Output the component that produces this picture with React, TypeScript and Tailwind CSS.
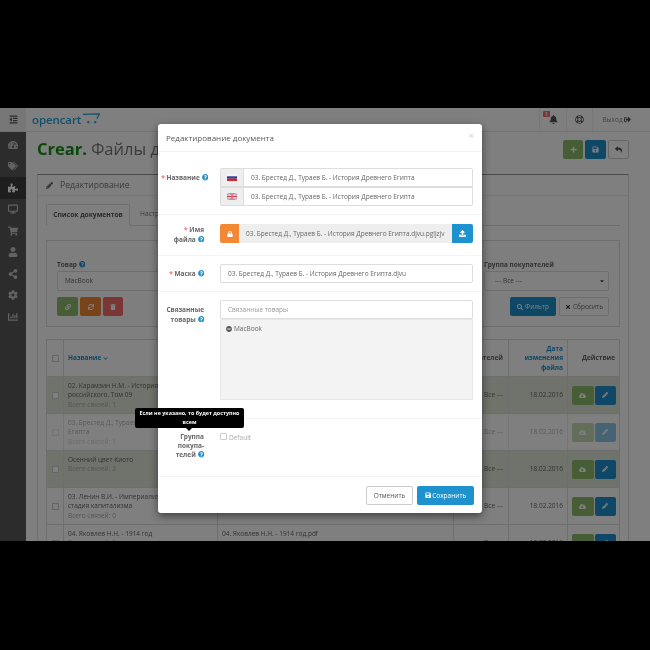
import React from 'react';
import {
  FaBell, FaChartBar, FaChevronDown, FaCaretDown, FaCloudDownloadAlt, FaCog, FaDesktop, FaTimes, FaRegLifeRing, FaLink,
  FaLock, FaMinusCircle, FaPencilAlt, FaPlus, FaPuzzlePiece, FaQuestionCircle, FaReply, FaSave, FaSearch, FaShareAlt,
  FaShoppingCart, FaSignOutAlt, FaSync, FaTachometerAlt, FaTags, FaTrash, FaUpload, FaUser, FaOutdent,
} from 'react-icons/fa';

const SIDE_ICONS = [
  { icon: FaTachometerAlt },
  { icon: FaTags },
  { icon: FaPuzzlePiece, active: true },
  { icon: FaDesktop },
  { icon: FaShoppingCart },
  { icon: FaUser },
  { icon: FaShareAlt },
  { icon: FaCog },
  { icon: FaChartBar },
];

const ROWS = [
  { title: '02. Карамзин Н.М. - История государства российского. Том 09', links: 'Всего связей: 1', file: '02. Карамзин Н.М. - История.djvu', green: true },
  { title: '03. Брестед Д., Тураев Б. - История Древнего Египта', links: 'Всего связей: 1', file: '03. Брестед Д., Тураев Б.djvu', faded: true },
  { title: 'Осенний цвет Киото', links: 'Всего связей: 2', file: 'Осенний цвет Киото.pdf', green: true },
  { title: '03. Ленин В.И. - Империализм, как высшая стадия капитализма', links: 'Всего связей: 0', file: 'капитализма.fb2z5KhcJ0eHHmRzZUlHTQHCAmgSWJdJ - UK' },
  { title: '04. Яковлев Н.Н. - 1914 год', links: 'Всего связей: 0', file: '04. Яковлев Н.Н. - 1914 год.pdf' },
];

const Help = () => <FaQuestionCircle className="inline-block text-[6.5px] text-[#1e91cf] align-[-0.5px]" />;

const Req = () => <span className="text-[#f56b6b]">* </span>;

const FlagRu = () => (
  <svg width="10" height="7" viewBox="0 0 10 7">
    <rect width="10" height="2.4" fill="#f4f4f4" />
    <rect y="2.3" width="10" height="2.4" fill="#2a3f9e" />
    <rect y="4.6" width="10" height="2.4" fill="#d8232a" />
  </svg>
);

const FlagGb = () => (
  <svg width="10" height="7" viewBox="0 0 10 7">
    <rect width="10" height="7" fill="#8d8dbb" />
    <path d="M0 0l10 7M10 0L0 7" stroke="#f0d0d0" strokeWidth="1.2" />
    <path d="M5 0v7M0 3.5h10" stroke="#eeeeee" strokeWidth="2.2" />
    <path d="M5 0v7M0 3.5h10" stroke="#d8434a" strokeWidth="1.2" />
  </svg>
);

const Cart = () => (
  <svg width="17" height="11" viewBox="0 0 16 10" fill="none" className="ml-[2px] mb-[3px]">
    <path d="M0 1.2c4-.6 10-.6 15.5-.6L13 5.2" stroke="#23a1d1" strokeWidth="1.2" />
    <circle cx="5" cy="8.4" r="1.1" fill="#23a1d1" />
    <circle cx="11.5" cy="8.4" r="1.1" fill="#23a1d1" />
  </svg>
);

const Modal = () => (
  <div className="absolute left-[158px] top-[16px] w-[324px] h-[389px] bg-white rounded-[3px] shadow-[0_3px_9px_rgba(0,0,0,0.5)] text-[6.5px] text-[#666]">
    <div className="h-[28px] border-b border-[#f2f2f2] px-[8px] flex items-center justify-between">
      <span className="text-[8px] text-[#595959]">Редактирование документа</span>
      <span className="text-[9px] text-[#d8d8d8] mb-[4px] font-bold">×</span>
    </div>

    <div className="h-[63px] border-b border-[#f4f4f4] flex pt-[16px]">
      <label className="w-[50px] shrink-0 text-right font-bold pt-[5px] leading-[9px] whitespace-nowrap"><Req />Название <Help /></label>
      <div className="ml-[12px] w-[253px]">
        <div className="h-[19px] flex border border-[#ddd] rounded-t-[2px]">
          <span className="w-[23px] bg-[#eee] border-r border-[#ddd] flex items-center justify-center"><FlagRu /></span>
          <span className="pl-[7px] leading-[17px]">03. Брестед Д., Тураев Б. - История Древнего Египта</span>
        </div>
        <div className="h-[19px] flex border border-[#ddd] rounded-b-[2px]">
          <span className="w-[23px] bg-[#eee] border-r border-[#ddd] flex items-center justify-center"><FlagGb /></span>
          <span className="pl-[7px] leading-[17px]">03. Брестед Д., Тураев Б. - История Древнего Египта</span>
        </div>
      </div>
    </div>

    <div className="h-[41px] border-b border-[#f4f4f4] flex pt-[9px]">
      <label className="w-[46px] shrink-0 text-right font-bold leading-[9.5px] pt-[1px]"><Req />Имя<br />файла <Help /></label>
      <div className="ml-[16px] w-[253px] h-[19px] flex">
        <span className="w-[19px] bg-[#f38733] rounded-l-[2px] flex items-center justify-center text-white text-[6px]"><FaLock /></span>
        <span className="w-[213px] bg-[#eee] pl-[7px] leading-[19px] whitespace-nowrap overflow-hidden">03. Брестед Д., Тураев Б. - История Древнего Египта.djvu.pgljzjv</span>
        <span className="w-[21px] bg-[#1e91cf] rounded-r-[2px] flex items-center justify-center text-white text-[7px]"><FaUpload /></span>
      </div>
    </div>

    <div className="h-[36px] border-b border-[#f4f4f4] flex pt-[8px]">
      <label className="w-[46px] shrink-0 text-right font-bold pt-[5px] leading-[9px]"><Req />Маска <Help /></label>
      <div className="ml-[16px] w-[253px] h-[19px] border border-[#ddd] rounded-[2px] pl-[7px] leading-[17px]">03. Брестед Д., Тураев Б. - История Древнего Египта.djvu</div>
    </div>

    <div className="h-[127px] border-b border-[#f4f4f4] flex pt-[8px]">
      <label className="w-[46px] shrink-0 text-right font-bold leading-[9.5px] pt-[5px]">Связанные<br />товары <Help /></label>
      <div className="ml-[16px] w-[253px]">
        <div className="h-[19px] border border-[#ddd] rounded-[2px] pl-[7px] leading-[17px] text-[#999]">Связанные товары</div>
        <div className="h-[81px] bg-[#f3f3f3] border border-[#e8e8e8] px-[5px] pt-[4px] flex items-start gap-[2px] leading-[10px]">
          <FaMinusCircle className="text-[6px] text-[#555] mt-[2px]" /> MacBook
        </div>
      </div>
    </div>

    <div className="h-[58px] border-b border-[#f4f4f4] flex pt-[13px]">
      <label className="w-[46px] shrink-0 text-right font-bold leading-[9.2px]">Группа<br />покупа-<br />телей <Help /></label>
      <div className="ml-[16px] flex items-start gap-[2px] text-[#aaa]">
        <span className="w-[7px] h-[7px] mt-[1px] border border-[#ccc] rounded-[1px]" />
        <span className="leading-[9px] mt-[1px]">Default</span>
      </div>
    </div>

    <div className="flex justify-end gap-[4px] pt-[9px] pr-[8px]">
      <button className="w-[47px] h-[19px] bg-white border border-[#ccc] rounded-[2px] text-[#555]">Отменить</button>
      <button className="w-[57px] h-[19px] bg-[#1e91cf] rounded-[2px] text-white flex items-center justify-center gap-[1px]"><FaSave className="text-[6.5px]" />Сохранить</button>
    </div>

    <div className="absolute left-[-23px] top-[284px] w-[109px] h-[20px] bg-black rounded-[2px] px-[4px] text-white text-[5.4px] font-bold text-center leading-[8.5px] pt-[1px]">
      Если не указано, то будет доступно всем
      <span className="absolute left-[51px] bottom-[-3px] border-x-[3px] border-x-transparent border-t-[3px] border-t-black" />
    </div>
  </div>
);

export default function App() {
  return (
    <div className="w-[650px] h-[650px] bg-black pt-[108px] font-['Open_Sans',sans-serif] blur-[0.4px]">
      <div className="relative w-[650px] h-[433px] overflow-hidden bg-white">
        <header className="h-[24px] flex border-b border-[#e6e6e6]">
          <div className="w-[26px] bg-[#eee] flex items-center justify-center text-[9px] text-[#555]"><FaOutdent /></div>
          <div className="ml-[6px] flex items-center">
            <span className="text-[11.5px] font-semibold tracking-[-0.1px] text-[#23a1d1]">opencart</span>
            <Cart />
          </div>
          <div className="ml-auto flex mr-[10px] text-[#555]">
            <span className="relative w-[27px] border-l border-[#eee] flex items-center justify-center text-[9px]">
              <FaBell />
              <span className="absolute left-[3px] top-[3px] w-[7px] h-[6px] bg-[#f56b6b] rounded-[1px] text-[5px] font-bold text-white text-center leading-[6px]">1</span>
            </span>
            <span className="w-[26px] border-l border-[#eee] flex items-center justify-center text-[9px]"><FaRegLifeRing /></span>
            <span className="w-[48px] border-l border-[#eee] flex items-center justify-center gap-[1px] text-[6.5px] text-[#888]">Выход<FaSignOutAlt className="text-[7px] text-[#555]" /></span>
          </div>
        </header>

        <div className="flex h-[409px]">
          <nav className="w-[26px] h-full pt-[2px] bg-[#585858] text-[#c4c4c4] text-[10px]">
            {SIDE_ICONS.map(({ icon: Icon, active }, i) => (
              <div key={i} className={`h-[21.5px] flex items-center justify-center ${active ? 'bg-[#3c3c3c] text-white' : ''}`}>
                <Icon />
              </div>
            ))}
          </nav>

          <main className="flex-1 bg-white pl-[11px] pr-[21px] pt-[8px]">
            <div className="flex justify-between items-start h-[34px]">
              <h1 className="text-[16.5px] leading-[18px] whitespace-nowrap text-[#777]"><b className="text-[#129012]">Crear.</b> Файлы документов</h1>
              <div className="flex gap-[2px] text-[7px]">
                <span className="w-[20px] h-[19px] bg-[#8fbb6c] rounded-[2px] text-white flex items-center justify-center"><FaPlus /></span>
                <span className="w-[21px] h-[19px] bg-[#1e91cf] rounded-[2px] text-white flex items-center justify-center"><FaSave /></span>
                <span className="w-[21px] h-[19px] bg-white border border-[#ccc] rounded-[2px] text-[#555] flex items-center justify-center"><FaReply /></span>
              </div>
            </div>

            <section className="border border-[#ddd] border-t-[#999] h-[380px]">
              <div className="h-[21px] border-b border-[#eee] pl-[8px] flex items-center gap-[7px] text-[8.6px] text-[#777]">
                <FaPencilAlt className="text-[7px] text-[#555]" /> Редактирование
              </div>
              <div className="px-[8px] pt-[8px]">
                <div className="h-[22px] flex border-b border-[#ddd] text-[6.7px]">
                  <span className="w-[84px] h-[22px] border border-[#ddd] border-b-white rounded-t-[2px] text-center leading-[20px] font-bold text-[#555]">Список документов</span>
                  <span className="pl-[10px] leading-[20px] text-[#777]">Настройки</span>
                </div>

                <div className="mt-[14px] h-[87px] border border-[#ddd] bg-[#fcfcfc] pl-[10px] pr-[10px] pt-[18px] text-[6.5px] text-[#666]">
                  <div className="flex justify-between">
                    <div>
                      <p className="font-bold leading-[11px]">Товар <Help /></p>
                      <div className="w-[140px] h-[20px] mt-[1px] bg-white border border-[#ddd] rounded-[2px] pl-[7px] leading-[18px]">MacBook</div>
                      <div className="flex gap-[2px] mt-[6px] text-[6px] text-white">
                        <span className="w-[21px] h-[19px] bg-[#8fbb6c] rounded-[2px] flex items-center justify-center"><FaLink /></span>
                        <span className="w-[21px] h-[19px] bg-[#f38733] rounded-[2px] flex items-center justify-center"><FaSync /></span>
                        <span className="w-[20px] h-[19px] bg-[#f56b6b] rounded-[2px] flex items-center justify-center"><FaTrash /></span>
                      </div>
                    </div>
                    <div className="w-[125px]">
                      <p className="font-bold leading-[11px]">Группа покупателей</p>
                      <div className="h-[20px] mt-[1px] bg-white border border-[#ddd] rounded-[2px] pl-[10px] pr-[3px] flex items-center justify-between">--- Все --- <FaCaretDown className="text-[6px] text-[#444]" /></div>
                      <div className="flex justify-end gap-[3px] mt-[6px]">
                        <span className="w-[46px] h-[19px] bg-[#1e91cf] rounded-[2px] text-white flex items-center justify-center gap-[2px]"><FaSearch className="text-[6px]" />Фильтр</span>
                        <span className="w-[50px] h-[19px] bg-white border border-[#ddd] rounded-[2px] flex items-center justify-center gap-[2px]"><FaTimes className="text-[6px] text-[#333]" />Сбросить</span>
                      </div>
                    </div>
                  </div>
                </div>

                <div className="mt-[12px] border-x border-t border-[#ddd] text-[6.5px] text-[#666]">
                  <div className="grid grid-cols-[16px_154px_236px_55px_59px_1fr] h-[37px] border-b border-[#ddd] font-bold">
                    <div className="flex items-center justify-center"><span className="w-[7px] h-[7px] border border-[#ccc]" /></div>
                    <div className="border-l border-[#ddd] pl-[4px] flex items-center gap-[2px] text-[#1e91cf]">Название <FaChevronDown className="text-[5px]" /></div>
                    <div className="border-l border-[#ddd] pl-[4px] flex items-center">Файл</div>
                    <div className="border-l border-[#ddd] pr-[5px] flex items-center justify-end text-right">покупателей</div>
                    <div className="border-l border-[#ddd] pr-[4px] flex items-center justify-end text-right leading-[9.5px] text-[#1e91cf]">Дата изменения файла</div>
                    <div className="border-l border-[#ddd] pr-[4px] flex items-center justify-end">Действие</div>
                  </div>
                  {ROWS.map((row) => (
                    <div key={row.title} className={`grid grid-cols-[16px_154px_236px_55px_59px_1fr] h-[37px] border-b border-[#ddd] ${row.green ? 'bg-[#e0e6d8]' : ''}`}>
                      <div className={`flex items-center justify-center ${row.faded ? 'opacity-40' : ''}`}><span className="w-[7px] h-[7px] bg-white border border-[#ccc]" /></div>
                      <div className={`border-l border-[#ddd] pl-[4px] pt-[4px] leading-[9.3px] ${row.faded ? 'opacity-50' : ''}`}>
                        {row.title}
                        <p className="text-[#aaa]">{row.links}</p>
                      </div>
                      <div className={`border-l border-[#ddd] pl-[4px] pt-[4px] leading-[9.3px] overflow-hidden whitespace-nowrap ${row.faded ? 'opacity-50' : ''}`}>{row.file}</div>
                      <div className={`border-l border-[#ddd] pr-[5px] flex items-center justify-end ${row.faded ? 'opacity-50' : ''}`}>--- Все ---</div>
                      <div className={`border-l border-[#ddd] pr-[4px] flex items-center justify-end ${row.faded ? 'opacity-50' : ''}`}>18.02.2016</div>
                      <div className={`border-l border-[#ddd] flex items-center justify-center gap-[1px] text-[7px] text-white ${row.faded ? 'opacity-50' : ''}`}>
                        <span className="w-[22px] h-[19px] bg-[#8fbb6c] rounded-[2px] flex items-center justify-center"><FaCloudDownloadAlt /></span>
                        <span className="w-[21px] h-[19px] bg-[#1e91cf] rounded-[2px] flex items-center justify-center"><FaPencilAlt className="text-[6px]" /></span>
                      </div>
                    </div>
                  ))}
                </div>
              </div>
            </section>
          </main>
        </div>

        <div className="absolute inset-0 bg-black/50" />
        <Modal />
      </div>
    </div>
  );
}
